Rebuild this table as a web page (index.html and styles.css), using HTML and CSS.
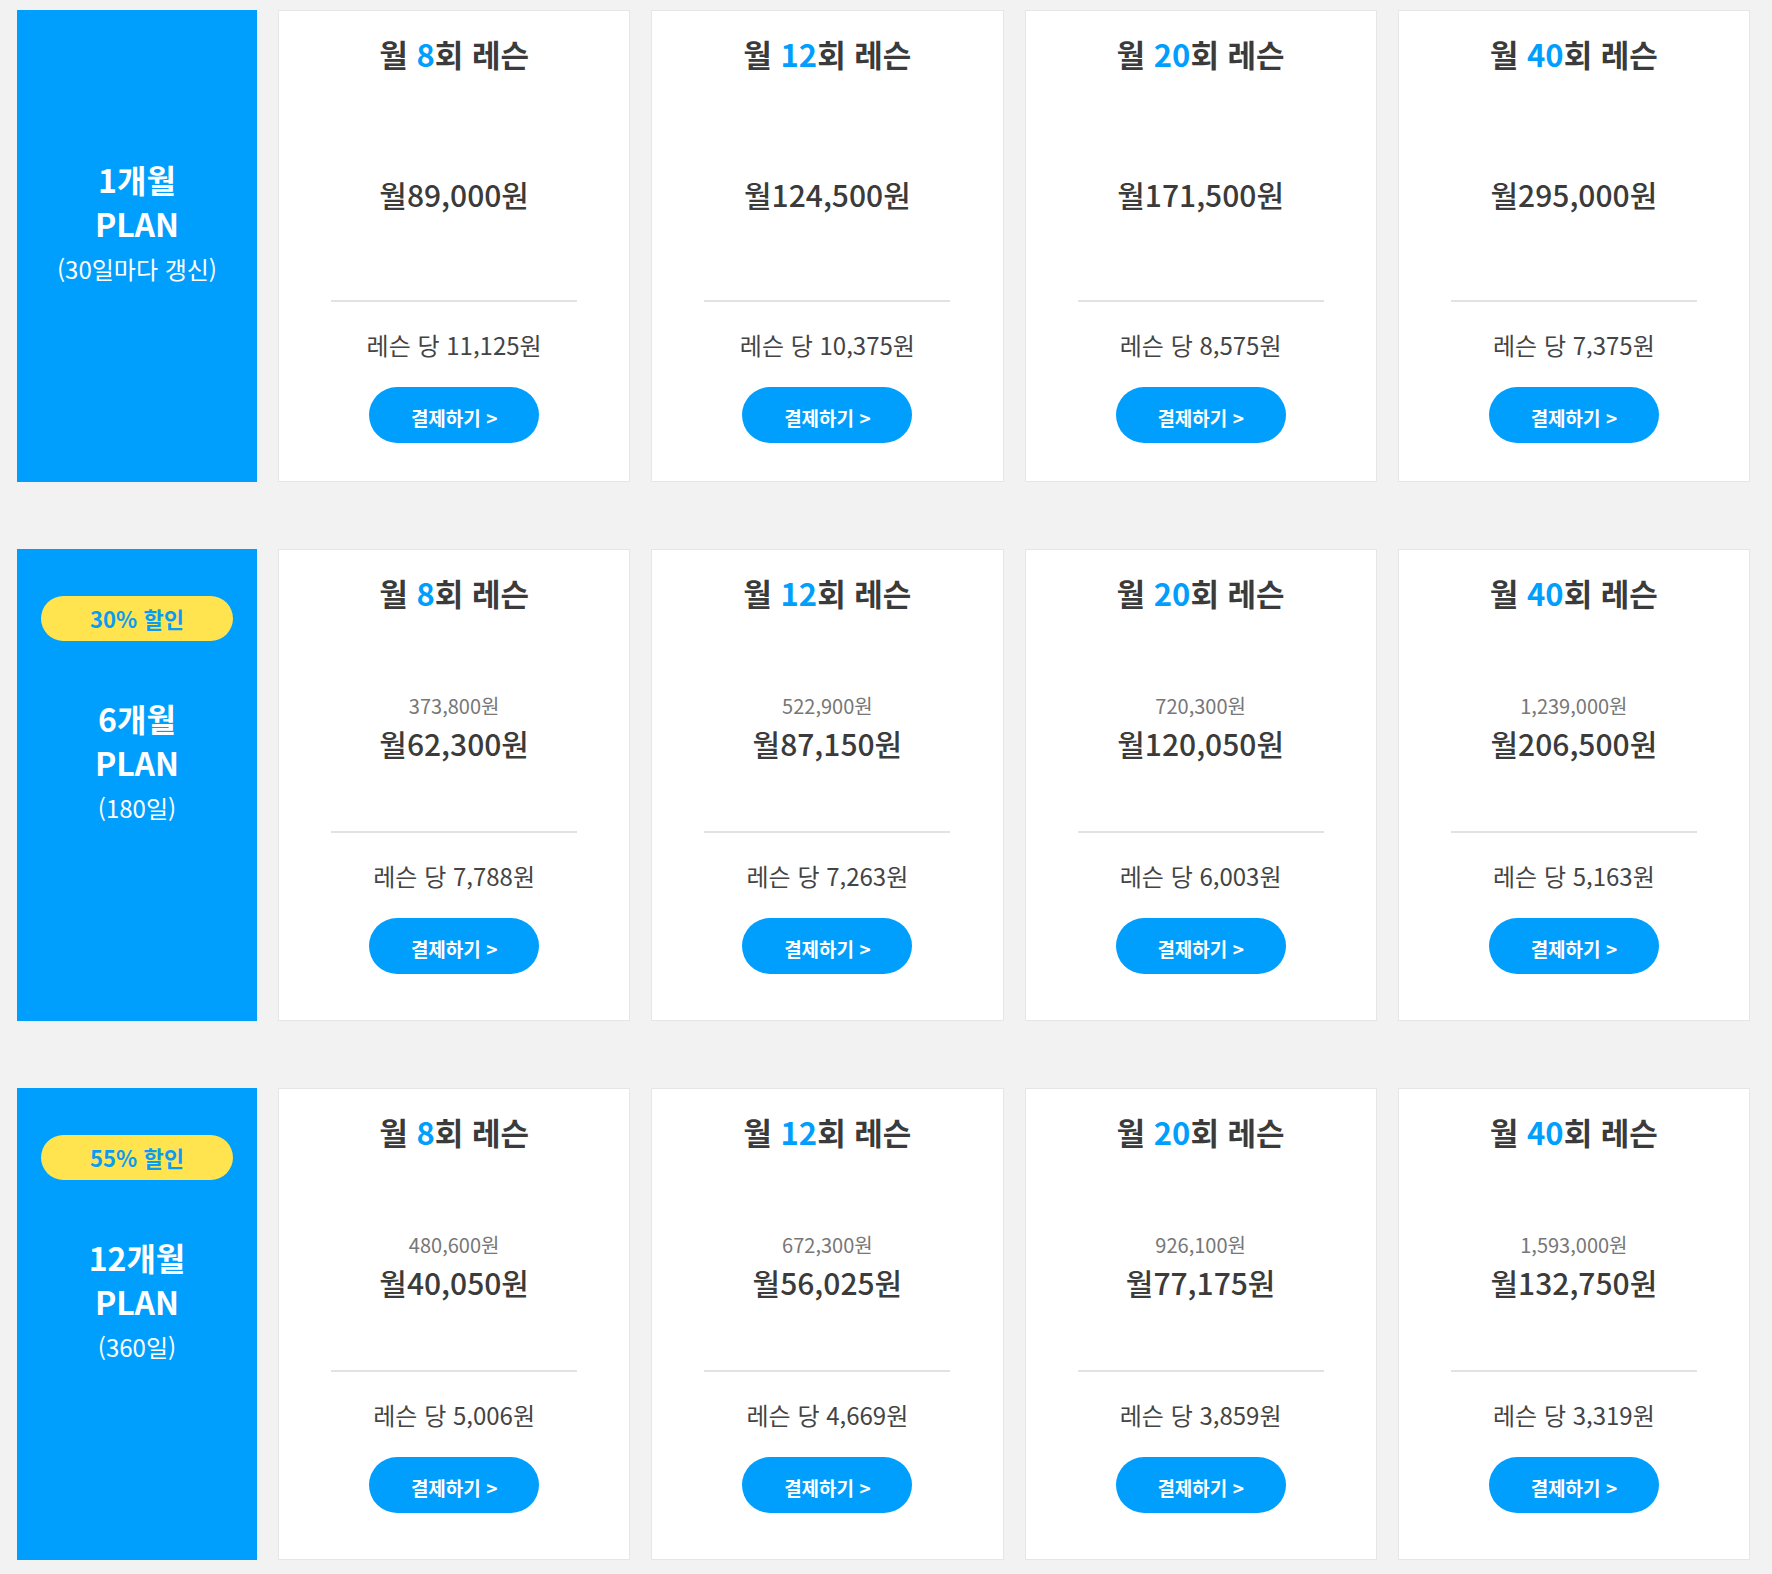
FILE: index.html
```html
<!DOCTYPE html>
<html lang="ko">
<head>
<meta charset="utf-8">
<title>레슨 요금제</title>
<link rel="stylesheet" href="styles.css">
</head>
<body>
<div class="plans">
  <section class="plan-row">
    <div class="period">
      <div class="badge-slot"></div>
      <div class="period-name">1개월</div>
      <div class="period-plan">PLAN</div>
      <div class="period-note">(30일마다 갱신)</div>
    </div>
    <div class="card">
      <h3 class="card-title">월 <span class="num">8</span>회 레슨</h3>
      <div class="price">월89,000원</div>
      <div class="divider"></div>
      <div class="per">레슨 당 11,125원</div>
      <a class="pay">결제하기 &gt;</a>
    </div>
    <div class="card">
      <h3 class="card-title">월 <span class="num">12</span>회 레슨</h3>
      <div class="price">월124,500원</div>
      <div class="divider"></div>
      <div class="per">레슨 당 10,375원</div>
      <a class="pay">결제하기 &gt;</a>
    </div>
    <div class="card">
      <h3 class="card-title">월 <span class="num">20</span>회 레슨</h3>
      <div class="price">월171,500원</div>
      <div class="divider"></div>
      <div class="per">레슨 당 8,575원</div>
      <a class="pay">결제하기 &gt;</a>
    </div>
    <div class="card">
      <h3 class="card-title">월 <span class="num">40</span>회 레슨</h3>
      <div class="price">월295,000원</div>
      <div class="divider"></div>
      <div class="per">레슨 당 7,375원</div>
      <a class="pay">결제하기 &gt;</a>
    </div>
  </section>

  <section class="plan-row">
    <div class="period">
      <div class="badge-slot"><span class="badge">30% 할인</span></div>
      <div class="period-name">6개월</div>
      <div class="period-plan">PLAN</div>
      <div class="period-note">(180일)</div>
    </div>
    <div class="card card--discount">
      <h3 class="card-title">월 <span class="num">8</span>회 레슨</h3>
      <div class="orig">373,800원</div>
      <div class="price">월62,300원</div>
      <div class="divider"></div>
      <div class="per">레슨 당 7,788원</div>
      <a class="pay">결제하기 &gt;</a>
    </div>
    <div class="card card--discount">
      <h3 class="card-title">월 <span class="num">12</span>회 레슨</h3>
      <div class="orig">522,900원</div>
      <div class="price">월87,150원</div>
      <div class="divider"></div>
      <div class="per">레슨 당 7,263원</div>
      <a class="pay">결제하기 &gt;</a>
    </div>
    <div class="card card--discount">
      <h3 class="card-title">월 <span class="num">20</span>회 레슨</h3>
      <div class="orig">720,300원</div>
      <div class="price">월120,050원</div>
      <div class="divider"></div>
      <div class="per">레슨 당 6,003원</div>
      <a class="pay">결제하기 &gt;</a>
    </div>
    <div class="card card--discount">
      <h3 class="card-title">월 <span class="num">40</span>회 레슨</h3>
      <div class="orig">1,239,000원</div>
      <div class="price">월206,500원</div>
      <div class="divider"></div>
      <div class="per">레슨 당 5,163원</div>
      <a class="pay">결제하기 &gt;</a>
    </div>
  </section>

  <section class="plan-row">
    <div class="period">
      <div class="badge-slot"><span class="badge">55% 할인</span></div>
      <div class="period-name">12개월</div>
      <div class="period-plan">PLAN</div>
      <div class="period-note">(360일)</div>
    </div>
    <div class="card card--discount">
      <h3 class="card-title">월 <span class="num">8</span>회 레슨</h3>
      <div class="orig">480,600원</div>
      <div class="price">월40,050원</div>
      <div class="divider"></div>
      <div class="per">레슨 당 5,006원</div>
      <a class="pay">결제하기 &gt;</a>
    </div>
    <div class="card card--discount">
      <h3 class="card-title">월 <span class="num">12</span>회 레슨</h3>
      <div class="orig">672,300원</div>
      <div class="price">월56,025원</div>
      <div class="divider"></div>
      <div class="per">레슨 당 4,669원</div>
      <a class="pay">결제하기 &gt;</a>
    </div>
    <div class="card card--discount">
      <h3 class="card-title">월 <span class="num">20</span>회 레슨</h3>
      <div class="orig">926,100원</div>
      <div class="price">월77,175원</div>
      <div class="divider"></div>
      <div class="per">레슨 당 3,859원</div>
      <a class="pay">결제하기 &gt;</a>
    </div>
    <div class="card card--discount">
      <h3 class="card-title">월 <span class="num">40</span>회 레슨</h3>
      <div class="orig">1,593,000원</div>
      <div class="price">월132,750원</div>
      <div class="divider"></div>
      <div class="per">레슨 당 3,319원</div>
      <a class="pay">결제하기 &gt;</a>
    </div>
  </section>
</div>
</body>
</html>
```

FILE: styles.css
```css
* { box-sizing: border-box; }

html, body {
  margin: 0;
  padding: 0;
  background: #f2f2f2;
}

body {
  font-family: "Noto Sans CJK KR", "Noto Sans", sans-serif;
  color: #3b3b3b;
}

.plans {
  display: flex;
  flex-direction: column;
  gap: 67px;
  padding: 10px 22px 14px 17px;
}

.plan-row {
  display: grid;
  grid-template-columns: 240px repeat(4, 1fr);
  column-gap: 21px;
  height: 472px;
}

/* left blue period panel */
.period {
  background: #009ffd;
  color: #fff;
  display: flex;
  flex-direction: column;
  align-items: center;
  padding-top: 47px;
  text-align: center;
}

.badge-slot {
  height: 45px;
  width: 192px;
  margin-bottom: 55px;
}

.badge {
  display: flex;
  align-items: center;
  justify-content: center;
  height: 45px;
  width: 192px;
  border-radius: 23px;
  background: #ffe44f;
  color: #0a9cf5;
  font-weight: 700;
  font-size: 22px;
  padding-bottom: 1px;
}

.period-name,
.period-plan {
  font-size: 32px;
  font-weight: 700;
  line-height: 44px;
}

.period-note {
  font-size: 24px;
  line-height: 48px;
  font-weight: 400;
}

/* lesson cards */
.card {
  background: #fff;
  border: 1px solid #e6e6e6;
  display: flex;
  flex-direction: column;
  align-items: center;
  padding-top: 23px;
  text-align: center;
}

.card-title {
  margin: 0;
  font-size: 31px;
  font-weight: 700;
  line-height: 40px;
  color: #3b3b3b;
}

.card-title .num {
  color: #009ffd;
}

.price {
  margin-top: 100px;
  font-size: 30px;
  font-weight: 500;
  line-height: 40px;
  color: #3b3b3b;
}

.orig {
  margin-top: 82px;
  font-size: 20px;
  line-height: 22px;
  color: #777;
}

.card--discount .price {
  margin-top: 6px;
}

.divider {
  width: 246px;
  height: 2px;
  background: #e2e2e2;
  margin-top: 86px;
}

.card--discount .divider {
  margin-top: 68px;
}

.per {
  margin-top: 26px;
  font-size: 24px;
  line-height: 34px;
  color: #444;
}

.pay {
  display: flex;
  align-items: center;
  justify-content: center;
  margin-top: 25px;
  width: 170px;
  height: 56px;
  border-radius: 28px;
  background: #009ffd;
  color: #fff;
  font-size: 19px;
  font-weight: 700;
  text-decoration: none;
  padding-top: 4px;
}
```
